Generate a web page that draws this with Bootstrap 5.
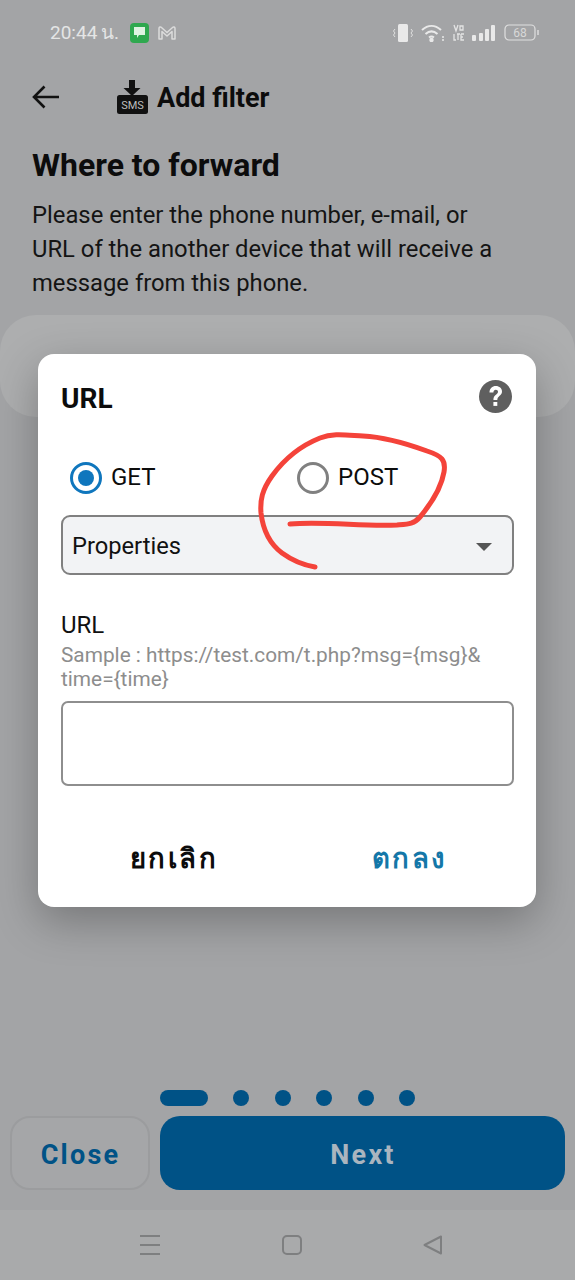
<!DOCTYPE html>
<html lang="en">
<head>
  <meta charset="UTF-8">
  <title>Add filter</title>
  <link href="https://cdn.jsdelivr.net/npm/bootstrap@5.3.0/dist/css/bootstrap.min.css" rel="stylesheet">
  <style>
    html, body { margin: 0; height: 1280px; overflow: hidden; }
    body { background: #a3a4a6; font-family: Roboto, "Noto Sans", sans-serif; color: #0c0c0c; }
    .screen { height: 1280px; width: 575px; }

    /* status bar */
    .status-row { height: 66px; padding: 0 35px 0 50px; color: #e4e5e5; font-size: 19px; word-spacing: -1px; }
    .status-time { width: 80px; white-space: nowrap; }

    /* page behind the dialog */
    .head-row { height: 62px; padding-left: 32px; }
    .head-title { font-size: 27px; font-weight: 700; margin-left: 9px; padding-top: 2px; }
    .sms-icon { margin-left: 58px; }
    .page-body { padding: 0 32px; }
    .page-title { font-size: 32px; font-weight: 700; line-height: 40px; margin: 17px 0 13px; }
    .page-text { font-size: 23.8px; line-height: 34px; margin: 0; color: #141414; width: 465px; }
    .ghost-field { height: 102px; margin-top: 15px; background: #adaeaf; border-radius: 36px; }

    /* pager and buttons */
    .pager-row { padding-left: 160px; gap: 25.4px; height: 16px; margin-bottom: 10px; }
    .pager-pill { width: 48px; height: 16px; border-radius: 8px; background: #005286; }
    .pager-dot { width: 16px; height: 16px; border-radius: 50%; background: #005286; }
    .action-row { padding: 0 10px; gap: 10px; height: 74px; }
    .btn-close-step, .btn-next-step { font-size: 27px; font-weight: 700; letter-spacing: 2.2px; border-radius: 20px; line-height: 1; padding: 4px 0 0 1px; }
    .btn-close-step { width: 140px; color: #005286; border: 2px solid #9b9c9e; background: #a5a6a8; }
    .btn-next-step { flex: 1; color: #aab5bf; background: #005286; border: 0; }
    .nav-strip { height: 70px; margin-top: 20px; background: #a9aaab; padding-left: 139px; gap: 121px; }

    /* dialog */
    .dialog-layer { padding: 354px 39px 0 38px; }
    .dialog-box { height: 553px; border: 0; border-radius: 16px; background: #fff; padding: 0 22px 0 23px; box-shadow: 0 14px 44px rgba(0,0,0,.28); }
    .dialog-head { height: 87px; padding-top: 2px; }
    .dialog-title { font-size: 28px; font-weight: 700; }
    .help-icon { margin: 0 2px 5px 0; }
    .radio-row { height: 74px; padding: 0 0 1px 9px; font-size: 24px; }
    .radio-item { gap: 9px; }
    .radio-item:first-child { width: 227px; }
    .radio-item > span { margin-top: -2px; }
    .radio-on, .radio-off { width: 32px; height: 32px; border-radius: 50%; flex: none; }
    .radio-on { border: 3px solid #0f76bd; padding: 5px; }
    .radio-on span { display: block; width: 16px; height: 16px; border-radius: 50%; background: #0f76bd; }
    .radio-off { border: 3px solid #808080; }
    .prop-select { height: 60px; padding: 4px 20px 0 9px; background: #f2f3f5; border: 2px solid #808080; border-radius: 9px; font-size: 23.7px; color: #111; }
    .prop-caret { width: 0; height: 0; border-left: 8px solid transparent; border-right: 8px solid transparent; border-top: 8px solid #555; }
    .url-label { font-size: 24px; line-height: 30px; margin-top: 35px; color: #111; }
    .url-hint { font-size: 20.8px; line-height: 24px; margin-top: 3px; color: #8d8d8d; }
    .url-input { height: 85px; margin-top: 10px; border: 2px solid #8e8e8e; border-radius: 7px; }
    .dialog-actions { margin-top: 51px; font-size: 27.5px; font-weight: 700; letter-spacing: 2.5px; font-family: "Noto Sans", Roboto, "DejaVu Sans", sans-serif; }
    .dialog-cancel { width: 224px; padding-left: 2px; text-align: center; color: #0c0c0c; }
    .dialog-ok { width: 210px; margin-left: 18px; padding-left: 2px; text-align: center; color: #1477a8; }
  </style>
</head>
<body>
<div class="screen position-relative d-flex flex-column">

  <div class="status-row d-flex align-items-center">
    <span class="status-time">20:44 น.</span>
    <svg width="20" height="22" viewBox="0 0 20 22" class="me-2">
      <rect x="0" y="1" width="19" height="20" rx="4" fill="#2fa84f"/>
      <path d="M4 5h11v8h-6l-2 3v-3H4z" fill="#dff3e2"/>
    </svg>
    <svg width="18" height="14" viewBox="0 0 18 14" fill="none" stroke="#dcdcdc" stroke-width="1.5" stroke-linejoin="round">
      <path d="M1 13V2.500C1 1 2.500 .5 3.500 1.500L9 6.500l5.500-5C15.500 .5 17 1 17 2.500V13h-3V5.500L9 10 4 5.500V13z"/>
    </svg>
    <div class="ms-auto d-flex align-items-center gap-2">
      <svg width="20" height="20" viewBox="0 0 20 20">
        <rect x="5" y="1" width="10" height="18" rx="1.500" fill="#e9e9e9"/>
        <path d="M2 6l-1.500 2 1.500 2-1.500 2 1.500 2M18 6l1.500 2-1.500 2 1.500 2-1.500 2" fill="none" stroke="#e0e0e0"/>
      </svg>
      <svg width="24" height="18" viewBox="0 0 24 18" fill="none" stroke="#e9e9e9" stroke-width="2">
        <path d="M1 6c6-5.500 13-5.500 19 0M4.500 10c4-3.500 8-3.500 12 0M8 13.500c2-1.500 3-1.500 5 0"/>
        <circle cx="10.500" cy="16" r="1.200" fill="#e9e9e9"/>
        <path d="M22 12v2M22 15v2" stroke-width="1.500"/>
      </svg>
      <span class="status-volte d-flex">
        <svg width="11" height="18" viewBox="0 0 11 18" fill="none" stroke="#e4e4e4" stroke-width="1.300">
          <path d="M1 1l2 6 2-6M7 2h3v4H7zM1 10v6h2M5 10v6M4 10h3M8 10h3M8 10v6h3M8 13h2"/>
        </svg>
      </span>
      <svg width="24" height="17" viewBox="0 0 24 17" fill="#e9e9e9">
        <rect x="0" y="10" width="4" height="6" rx="1"/><rect x="7" y="8" width="4" height="8" rx="1"/>
        <rect x="13" y="4" width="4" height="12" rx="1"/><rect x="19" y="0" width="4" height="16" rx="1"/>
      </svg>
      <svg width="36" height="18" viewBox="0 0 36 18">
        <rect x="1" y="1" width="30" height="15" rx="4" fill="none" stroke="#e0e0e0" stroke-width="1.200"/>
        <text x="16" y="13" text-anchor="middle" font-family="Roboto" font-size="12" fill="#d8d8d8">68</text>
        <path d="M34 6v5" stroke="#dcdcdc" stroke-width="1.500"/>
      </svg>
    </div>
  </div>

  <div class="head-row d-flex align-items-center">
    <svg width="27" height="24" viewBox="0 0 27 24" fill="none" stroke="#111" stroke-width="2.600">
      <path d="M27 12H2M12.500 1.500L2 12l10.500 10.500"/>
    </svg>
    <svg class="sms-icon" width="31" height="34" viewBox="0 0 31 34">
      <path d="M12 0h6v8h5.500L15 16 6.500 8H12z" fill="#111"/>
      <rect x="0" y="15" width="31" height="19" rx="2.500" fill="#111"/>
      <text x="15.500" y="29" text-anchor="middle" font-family="Roboto" font-size="11" fill="#bdbdbd">SMS</text>
    </svg>
    <span class="head-title">Add filter</span>
  </div>

  <div class="page-body">
    <h1 class="page-title">Where to forward</h1>
    <p class="page-text">Please enter the phone number, e-mail, or URL of the another device that will receive a message from this phone.</p>
  </div>
  <div class="ghost-field"></div>

  <div class="flex-grow-1"></div>

  <div class="pager-row d-flex">
    <div class="pager-pill"></div>
    <div class="pager-dot"></div>
    <div class="pager-dot"></div>
    <div class="pager-dot"></div>
    <div class="pager-dot"></div>
    <div class="pager-dot"></div>
  </div>
  <div class="action-row d-flex">
    <button type="button" class="btn btn-close-step">Close</button>
    <button type="button" class="btn btn-next-step">Next</button>
  </div>

  <div class="nav-strip d-flex align-items-center">
    <svg width="22" height="22" viewBox="0 0 22 22" stroke="#7e7f80" stroke-width="2"><path d="M1 2h20M1 11h20M1 20h20"/></svg>
    <svg width="20" height="20" viewBox="0 0 20 20" fill="none" stroke="#7e7f80" stroke-width="2"><rect x="1" y="1" width="18" height="18" rx="4"/></svg>
    <svg width="20" height="20" viewBox="0 0 20 20" fill="none" stroke="#7e7f80" stroke-width="2" stroke-linejoin="round"><path d="M18 1.500v17L1.500 10z"/></svg>
  </div>

  <!-- dialog sits over the page -->
  <div class="dialog-layer position-absolute top-0 start-0 w-100">
    <div class="card dialog-box">
      <div class="dialog-head d-flex align-items-center justify-content-between">
        <span class="dialog-title">URL</span>
        <svg width="33" height="33" viewBox="0 0 33 33" class="help-icon">
          <circle cx="16.500" cy="16.500" r="16.500" fill="#5f5f5f"/>
          <path d="M10.500 12.500C10.500 8.500 13.300 6 16.800 6c3.500 0 6.200 2.300 6.200 5.500 0 4.300-4.700 4.500-4.700 8.500h-3.900c0-5.300 4.600-5.500 4.600-8.200 0-1.200-.9-2.100-2.200-2.100-1.400 0-2.300 1-2.400 2.800z" fill="#fff"/>
          <rect x="14.400" y="22" width="3.900" height="3.900" fill="#fff"/>
        </svg>
      </div>
      <div class="radio-row d-flex align-items-center">
        <div class="radio-item d-flex align-items-center">
          <div class="radio-on"><span></span></div>
          <span>GET</span>
        </div>
        <div class="radio-item d-flex align-items-center">
          <div class="radio-off"></div>
          <span>POST</span>
        </div>
      </div>
      <div class="prop-select d-flex align-items-center justify-content-between">
        <span>Properties</span>
        <span class="prop-caret"></span>
      </div>
      <div class="url-label">URL</div>
      <div class="url-hint">Sample : https://test.com/t.php?msg={msg}&amp;<br>time={time}</div>
      <div class="url-input"></div>
      <div class="dialog-actions d-flex">
        <div class="dialog-cancel">ยกเลิก</div>
        <div class="dialog-ok">ตกลง</div>
      </div>
    </div>
  </div>

  <!-- red pen scribble around POST -->
  <svg class="position-absolute top-0 start-0" width="575" height="1280" viewBox="0 0 575 1280" fill="none">
    <path d="M290 524C325 521 365 527 397 525C408 524 414 524 420 517C430 505 441 490 444 472C446 460 442 456 427 451C405 443 385 437 363 436C345 435 333 433 320 438C300 446 285 458 272 476C262 490 260 500 261 513C263 530 270 544 282 553C293 561 303 565 315 567" stroke="#f4433a" stroke-width="5" stroke-linecap="round"/>
  </svg>
</div>
<script src="https://cdn.jsdelivr.net/npm/bootstrap@5.3.0/dist/js/bootstrap.bundle.min.js"></script>
</body>
</html>
